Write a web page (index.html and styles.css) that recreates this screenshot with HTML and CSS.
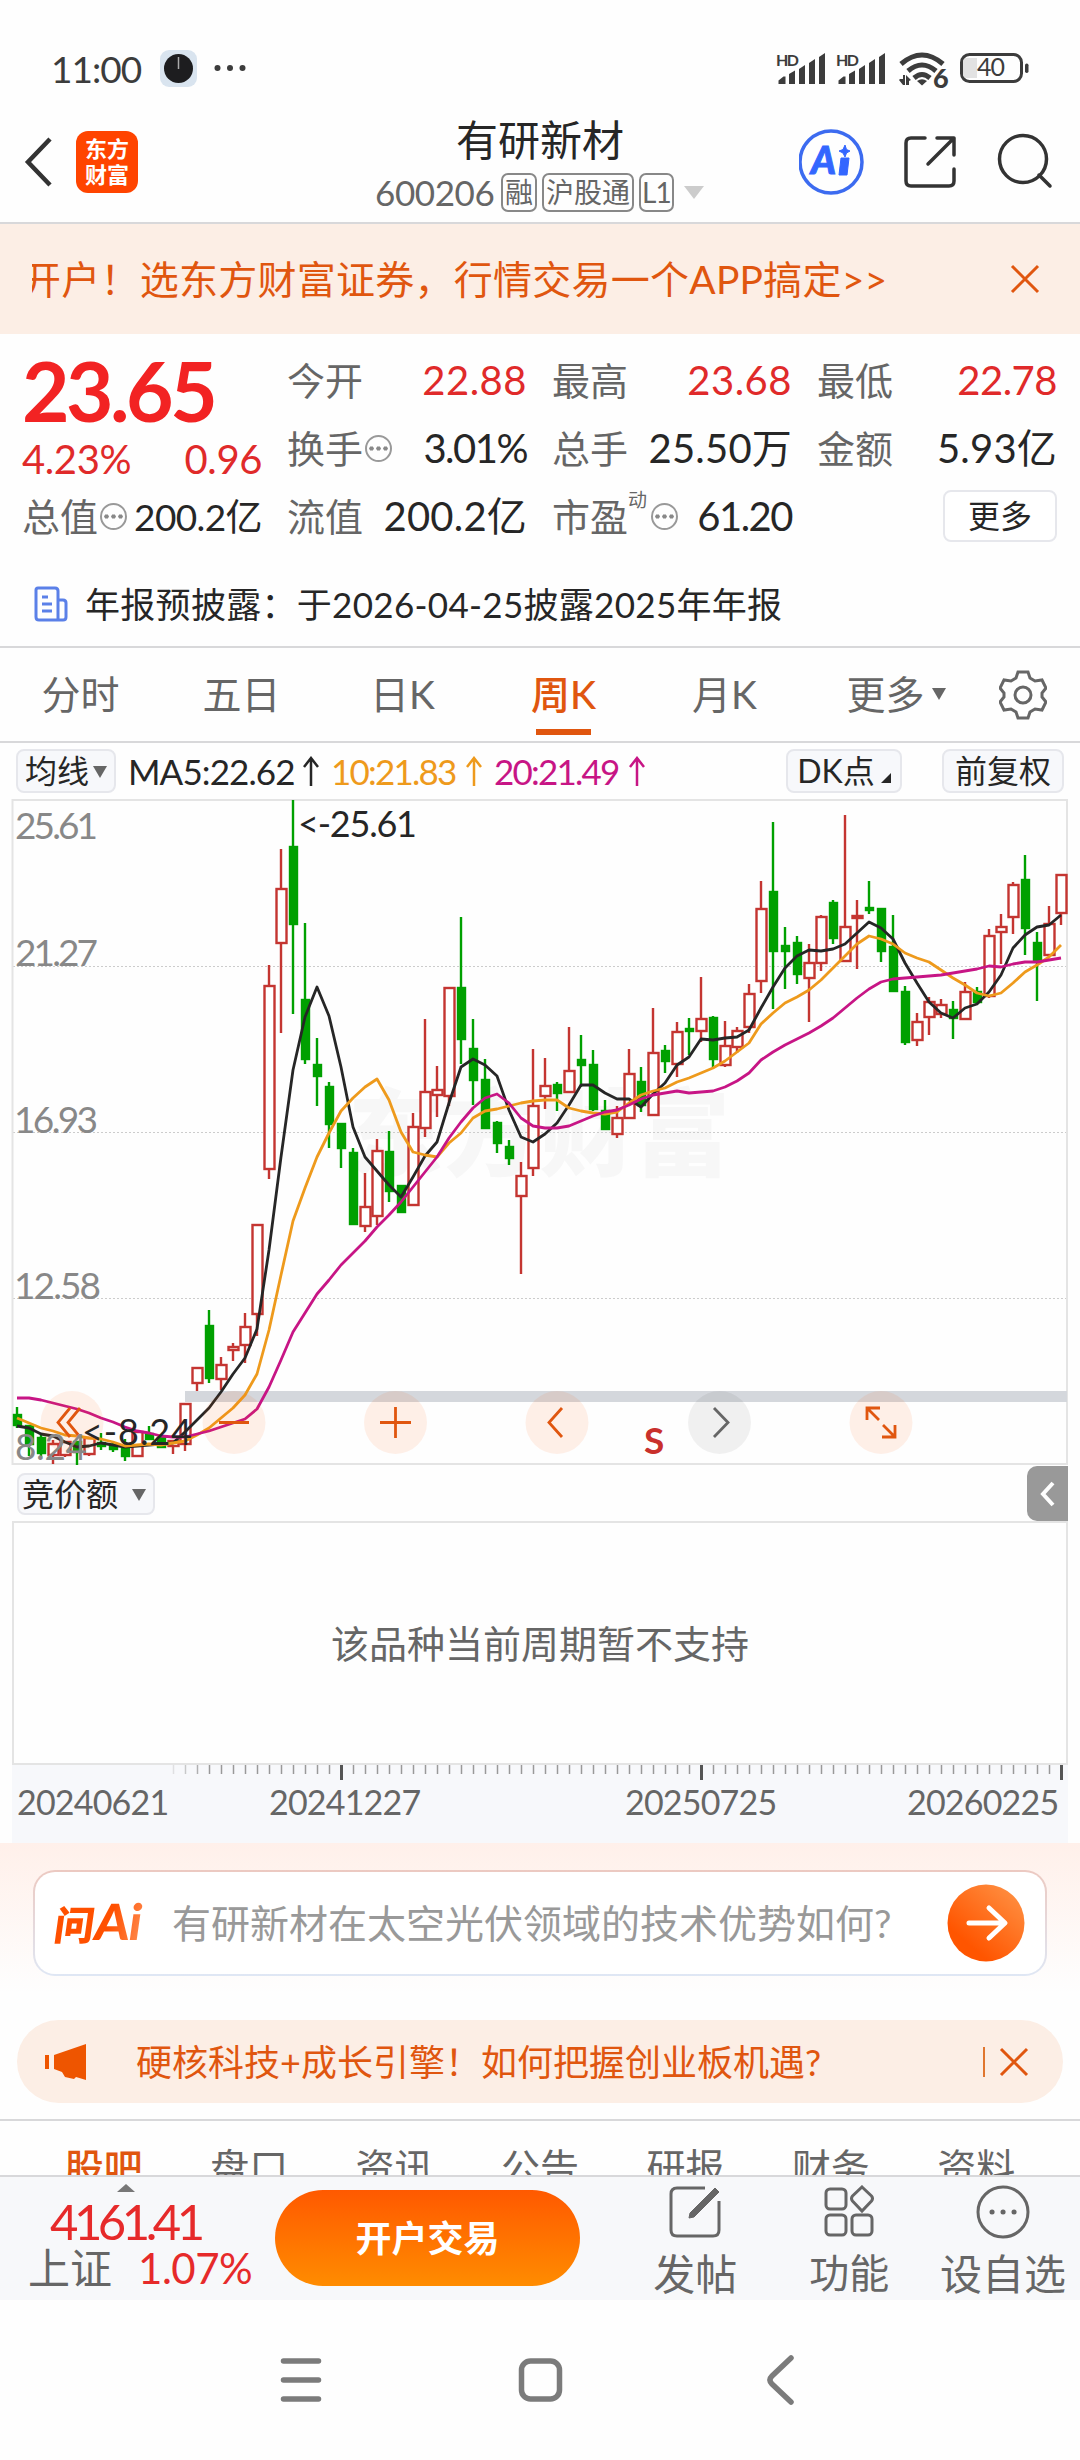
FILE: index.html
```html
<!DOCTYPE html>
<html lang="zh-CN">
<head>
    <meta charset="UTF-8">
    <title>有研新材 600206</title>
    <link rel="stylesheet" href="styles.css">
</head>
<body>
<div class="status-bar">
    <span class="time">11:00</span>
    <svg class="clock-app" viewBox="0 0 37 37">
        <rect width="37" height="37" rx="9" fill="#d9e4ef"/>
        <circle cx="18.500" cy="18.500" r="14.500" fill="#1d1d1f"/>
        <path d="M18.500 7v12" stroke="#aaa" stroke-width="1.500"/>
    </svg>
    <svg class="dots" viewBox="0 0 32 8">
        <circle cx="3.500" cy="4" r="3"/><circle cx="16" cy="4" r="3"/><circle cx="28.500" cy="4" r="3"/>
    </svg>
    <svg class="status-icons" viewBox="0 0 256 44">
        <g id="signal">
            <text class="hd" x="0" y="16" textLength="23">HD</text>
            <path d="M2.500 34v-3.500l5-4h2V34zM13 34V24l6-3.500V34zM23 34V19l6-4v19zM33 34V13l6-4v25zM43 34V7l6-4v31z"/>
        </g>
        <use href="#signal" x="60"/>
        <g fill="none" stroke="#3c3c3c" stroke-width="5">
            <path d="M125 14q21-18 42 0M132 21q14-12 28 0M138 28q8-7 16 0"/>
        </g>
        <path d="M141 31q5-3.500 10 0l-5 4.500z"/>
        <path d="M124 29h3v-4h2v10h-2l-4-5M130 35V25l5 5-2 1v4z"/>
        <text class="six" x="157" y="38">6</text>
        <rect x="185.500" y="4.500" width="60" height="27" rx="8" fill="none" stroke="#3c3c3c" stroke-width="3"/>
        <path d="M191 8h10v20h-10a4 4 0 0 1-4-4V12a4 4 0 0 1 4-4z" fill="#e2e2e2"/>
        <rect x="249" y="13.500" width="3.500" height="9.500" rx="1.700"/>
        <text class="battery" x="201" y="26" textLength="28">40</text>
    </svg>
</div>

<header class="top-nav">
    <svg class="back" viewBox="0 0 30 52"><path d="M26 3L4 26l22 23"/></svg>
    <div class="logo"><span>东方</span><span>财富</span></div>
    <div class="stock-title">
        <h1>有研新材</h1>
        <div class="stock-code">
            <span class="code">600206</span>
            <span class="tag">融</span>
            <span class="tag">沪股通</span>
            <span class="tag l1">L1</span>
            <i class="caret"></i>
        </div>
    </div>
    <svg class="nav-icons" viewBox="0 0 260 70">
        <circle cx="32" cy="35" r="31" fill="none" stroke="#3c6bf0" stroke-width="3.500"/>
        <text class="ai-text" x="12" y="47">A</text>
        <path d="M42 31h8l-2 17h-8zM46 18l1.500 4.500L51 24l-3.500 2L46 30l-2-4-4-2 4-1.500z" fill="#3366ff" stroke="#3366ff" stroke-width="1"/>
        <g fill="none" stroke="#333" stroke-width="3.500" stroke-linecap="round" stroke-linejoin="round">
            <path d="M126 11h-14q-5 0-5 5v38q0 5 5 5h38q5 0 5-5V42M138 11h17v17M155 11l-26 26"/>
            <circle cx="224" cy="32" r="23.500"/>
            <path d="M240 48l11 11"/>
        </g>
    </svg>
</header>

<div class="promo">
    <p>开户！选东方财富证券，行情交易一个APP搞定&gt;&gt;</p>
    <svg class="close" viewBox="0 0 30 30"><path d="M2 2l26 26M28 2L2 28"/></svg>
</div>

<section class="quote">
    <div class="price">
        <strong>23.65</strong>
        <div><span>4.23%</span><span>0.96</span></div>
    </div>
    <div class="item"><label>今开</label><b class="red">22.88</b></div>
    <div class="item"><label>最高</label><b class="red">23.68</b></div>
    <div class="item"><label>最低</label><b class="red last">22.78</b></div>
    <div class="item"><label>换手</label><i class="info"></i><b class="tight">3.01%</b></div>
    <div class="item"><label>总手</label><b>25.50万</b></div>
    <div class="item"><label>金额</label><b>5.93亿</b></div>
    <div class="item small"><label>总值</label><i class="info"></i><b>200.2亿</b></div>
    <div class="item"><label>流值</label><b>200.2亿</b></div>
    <div class="item"><label>市盈</label><sup>动</sup><i class="info"></i><b class="tight">61.20</b></div>
    <div class="item"><button>更多</button></div>
</section>

<div class="notice">
    <svg viewBox="0 0 34 36">
        <path d="M4 2h17q3 0 3 3v29H5q-3 0-3-3V4q0-2 2-2zM24 14h5q3 0 3 3v14q0 3-3 3h-6M8 11h6M8 18h10M8 25h10"/>
    </svg>
    <p>年报预披露：于2026-04-25披露2025年年报</p>
</div>

<nav class="periods">
    <a>分时</a><a>五日</a><a>日K</a><a class="active">周K</a><a>月K</a>
    <a class="more">更多<i class="caret"></i></a>
    <svg viewBox="0 0 48 50">
        <path d="M19 2h10l2 6 5 3 7-1 4 8-4 5v4l4 5-4 8-7-1-5 3-2 6H19l-2-6-5-3-7 1-4-8 4-5v-4l-4-5 4-8 7 1 5-3z"/>
        <circle cx="24" cy="25" r="8"/>
    </svg>
</nav>

<div class="ma-bar">
    <button>均线<i class="caret"></i></button>
    <span class="ma5">MA5:22.62</span><svg viewBox="0 0 16 30"><path d="M8 30V3M1 11l7-9 7 9"/></svg>
    <span class="ma10">10:21.83</span><svg class="ma10" viewBox="0 0 16 30"><path d="M8 30V3M1 11l7-9 7 9"/></svg>
    <span class="ma20">20:21.49</span><svg class="ma20" viewBox="0 0 16 30"><path d="M8 30V3M1 11l7-9 7 9"/></svg>
    <button class="dk">DK点<i class="corner"></i></button>
    <button class="adjust">前复权</button>
</div>

<svg class="kline" viewBox="0 798 1080 668">
    <text class="watermark" x="348" y="1169" textLength="382">东方财富</text>
    <path class="grid" d="M13 966.500H1067M13 1132.500H1067M13 1298.500H1067"/>
    <path class="frame" d="M12.500 800H1067V1464H12.500z"/>
    <g id="candles"></g>
    <rect x="185" y="1391" width="882" height="11" fill="#d4d7dc"/>
    <g id="averages"></g>
    <g class="controls">
        <circle cx="72" cy="1422.500" r="31.500"/><circle cx="234" cy="1422.500" r="31.500"/>
        <circle cx="395.500" cy="1422.500" r="31.500"/><circle cx="557" cy="1422.500" r="31.500"/>
        <circle class="off" cx="719.500" cy="1422.500" r="31.500"/><circle cx="881" cy="1422.500" r="31.500"/>
        <path d="M70 1408l-12 14.500 12 14.500M80 1408l-12 14.500 12 14.500M219 1422.500h30M380 1422.500h31M395.500 1407v31M562 1408l-13 14.500 13 14.500"/>
        <path class="off" d="M714 1408l14 14.500-14 14.500"/>
        <path d="M867 1420v-12h13M868 1409l11 11M895 1425v12h-13M894 1436l-11-11"/>
    </g>
    <g class="levels">
        <text x="15" y="839" textLength="83">25.61</text>
        <text x="15" y="966" textLength="83">21.27</text>
        <text x="14" y="1133" textLength="84">16.93</text>
        <text x="14" y="1299" textLength="87">12.58</text>
        <text x="15" y="1460" textLength="72">8.24</text>
    </g>
    <text class="mark" x="298" y="837" textLength="119">&lt;-25.61</text>
    <text class="mark" x="82" y="1445" textLength="110">&lt;-8.24</text>
    <text class="sell" x="644" y="1454">S</text>
</svg>

<div class="sub-bar">
    <button>竞价额<i class="caret"></i></button>
    <div class="drawer"><svg viewBox="0 0 16 28"><path d="M13 3L3 14l10 11"/></svg></div>
</div>
<div class="sub-chart">该品种当前周期暂不支持</div>
<div class="axis">
    <svg viewBox="12 0 1056 16"><g id="ticks"></g></svg>
    <div><span>20240621</span><span>20241227</span><span>20250725</span><span>20260225</span></div>
</div>

<section class="ask">
    <div class="ask-box">
        <span class="ask-logo">问<em>Ai</em></span>
        <p>有研新材在太空光伏领域的技术优势如何?</p>
        <svg viewBox="0 0 78 78">
            <defs>
                <linearGradient id="go" x1="0.300" y1="0.800" x2="0.900" y2="0.100">
                    <stop offset="0" stop-color="#ff5500"/><stop offset="1" stop-color="#ff8e40"/>
                </linearGradient>
            </defs>
            <circle cx="39" cy="39" r="38.500" fill="url(#go)"/>
            <path d="M22 39h35M42 24l16 15-16 15"/>
        </svg>
    </div>
    <div class="pill">
        <svg class="horn" viewBox="0 0 42 36"><path d="M0 11h4v14H0zM9 11L41 0v36l-10-3-2 2-9-2-3-5-8-3z"/></svg>
        <p>硬核科技+成长引擎！如何把握创业板机遇?</p>
        <svg class="close" viewBox="0 0 30 30"><path d="M2 2l26 26M28 2L2 28"/></svg>
    </div>
</section>

<nav class="info-tabs">
    <a class="active">股吧</a><a>盘口</a><a>资讯</a><a>公告</a><a>研报</a><a>财务</a><a>资料</a>
</nav>

<footer class="bottom-bar">
    <div class="index">
        <i class="caret up"></i>
        <b>4161.41</b>
        <div><span>上证</span><b>1.07%</b></div>
    </div>
    <button>开户交易</button>
    <a class="post">
        <svg viewBox="0 0 54 54"><path d="M37 3H9Q3 3 3 9v36q0 6 6 6h36q6 0 6-6V16"/><path d="M21 33l1-5L47 3l4 4-25 25z" fill="#666" stroke-width="1"/></svg>
        发帖
    </a>
    <a class="tools">
        <svg viewBox="0 0 54 54"><rect x="4" y="4" width="20" height="20" rx="4"/><rect x="4" y="30" width="20" height="20" rx="4"/><rect x="30" y="30" width="20" height="20" rx="4"/><path d="M40 2l9.500 9q2 2.500 0 5L40 26l-9.500-10q-2-2.500 0-5z"/></svg>
        功能
    </a>
    <a class="watch">
        <svg viewBox="0 0 54 54"><circle cx="27" cy="27" r="25"/><path class="dot" d="M16 27h.1M27 27h.1M38 27h.1"/></svg>
        设自选
    </a>
</footer>

<div class="system-nav">
    <svg viewBox="0 0 600 100">
        <path d="M43.500 31h35M43.500 50h35M43.500 69h35"/>
        <rect x="281.500" y="31" width="38" height="38" rx="9"/>
        <path d="M551 28l-19 18q-4 4 0 8l19 18"/>
    </svg>
</div>
<script src="app.js"></script>
</body>
</html>
```
FILE: styles.css
```css
body {
    margin: 0;
    width: 1080px;
    background: #fefefe;
    color: #262626;
    font-family: Lato, "Noto Sans CJK SC", sans-serif;
    line-height: 1;
}
h1, p {
    margin: 0;
    font-weight: normal;
}
button {
    box-sizing: border-box;
    padding: 0;
    border: 2px solid #e6e7ec;
    border-radius: 8px;
    background: #f7f8fb;
    color: #262626;
    font-family: inherit;
    font-size: 32px;
    line-height: 1;
    white-space: nowrap;
}
svg {
    flex: none;
}
.caret {
    display: inline-block;
    border: 7px solid transparent;
    border-top: 12px solid #666;
    border-bottom: 0;
}
.close {
    width: 30px;
    height: 30px;
    stroke: #e0560f;
    stroke-width: 3;
}

/* status bar */
.status-bar {
    display: flex;
    box-sizing: border-box;
    height: 112px;
    padding: 50px 44px 0 51px;
    color: #3c3c3c;
    fill: #3c3c3c;
}
.time {
    width: 109px;
    font-size: 37px;
    letter-spacing: -1px;
}
.clock-app {
    width: 37px;
    height: 37px;
}
.dots {
    width: 32px;
    height: 8px;
    margin: 14px auto 0 17px;
}
.status-icons {
    width: 256px;
    height: 44px;
    margin-right: 4px;
}
.hd {
    font-size: 16px;
    font-weight: 700;
}
.six {
    font-size: 27px;
    font-weight: 900;
}
.battery {
    font-size: 25px;
}

/* header */
.top-nav {
    display: flex;
    box-sizing: border-box;
    height: 112px;
    border-bottom: 2px solid #d8d8da;
}
.back {
    width: 30px;
    height: 52px;
    margin: 24px 22px 0 24px;
    fill: none;
    stroke: #333;
    stroke-width: 4.500;
}
.logo {
    display: flex;
    flex-direction: column;
    justify-content: center;
    width: 62px;
    height: 62px;
    margin-top: 19px;
    border-radius: 12px;
    background: #ff4400;
    color: #fff;
    font-size: 22px;
    font-weight: 700;
    line-height: 26px;
    text-align: center;
}
.stock-title {
    width: 390px;
    margin: 4px 0 0 207px;
    padding-left: 8px;
    text-align: center;
}
.stock-title h1 {
    width: 374px;
    font-size: 42px;
    line-height: 48px;
    font-weight: 400;
}
.stock-code {
    display: flex;
    align-items: center;
    width: 360px;
    margin: 9px 0 0 22px;
    color: #666;
}
.code {
    width: 126px;
    font-size: 35px;
    letter-spacing: -0.4px;
    text-align: left;
}
.tag {
    box-sizing: border-box;
    height: 39px;
    margin-right: 5px;
    padding: 0 2px;
    border: 2px solid #888;
    border-radius: 7px;
    font-size: 28px;
    line-height: 34px;
}
.l1 {
    padding: 0 1px;
    letter-spacing: -1px;
}
.stock-code .caret {
    margin-left: 5px;
    border-width: 13px 10px 0;
    border-top-color: #ccc;
}
.nav-icons {
    width: 260px;
    height: 70px;
    margin: 15px 0 0 56px;
}
.ai-text {
    fill: #3366ff;
    stroke: #3366ff;
    font-size: 38px;
    font-style: italic;
    font-weight: 900;
}

.promo {
    display: flex;
    align-items: center;
    justify-content: space-between;
    box-sizing: border-box;
    height: 110px;
    padding: 0 40px 0 32px;
    background: #fceee5;
    color: #e0560f;
    font-size: 39px;
}
.promo p {
    overflow: hidden;
    line-height: 50px;
    letter-spacing: 0.25px;
    text-indent: -10px;
    white-space: nowrap;
}

/* quote panel */
.quote {
    display: grid;
    grid-template-columns: repeat(4, 240px);
    grid-template-rows: repeat(3, 68px);
    column-gap: 25px;
    height: 216px;
    padding: 12px 0 0 22px;
}
.price {
    grid-row: span 2;
    color: #f22323;
}
.price strong {
    display: block;
    margin-top: 4px;
    font-size: 82px;
    line-height: 80px;
    letter-spacing: -3.500px;
}
.price div {
    display: flex;
    justify-content: space-between;
    margin-top: 9px;
    color: #e02a2a;
    font-size: 40px;
    letter-spacing: -0.4px;
}
.item {
    display: flex;
    align-items: center;
}
.item label {
    color: #666;
    font-size: 38px;
}
.item b {
    margin-left: auto;
    color: #262626;
    font-size: 40px;
    font-weight: normal;
    letter-spacing: 0.2px;
    white-space: nowrap;
}
.item b.red {
    color: #e02a2a;
    letter-spacing: 0.5px;
}
.item b.tight {
    letter-spacing: -1.500px;
}
.item b.last {
    letter-spacing: -0.5px;
}
.item.small b {
    font-size: 37px;
    letter-spacing: -0.6px;
}
.item sup {
    align-self: flex-start;
    margin: 8px 2px 0 0;
    color: #666;
    font-size: 19px;
}
.info {
    box-sizing: border-box;
    flex: none;
    width: 27px;
    height: 27px;
    margin-left: 2px;
    border: 2px solid #999;
    border-radius: 50%;
    background: radial-gradient(circle, #888 2px, transparent 2.500px) center / 7px 24px repeat-x content-box;
}
.item button {
    width: 114px;
    height: 52px;
    margin-left: auto;
    background: #fff;
}
.notice {
    display: flex;
    align-items: center;
    box-sizing: border-box;
    height: 86px;
    padding: 0 0 0 34px;
    border-bottom: 2px solid #d8d8da;
    font-size: 35px;
    letter-spacing: 0.3px;
}
.notice svg {
    width: 34px;
    height: 36px;
    margin-right: 17px;
    fill: none;
    stroke: #5b80e8;
    stroke-width: 3;
}

/* period tabs */
.periods {
    display: grid;
    grid-template-columns: repeat(5, 161px) 194px 48px;
    box-sizing: border-box;
    height: 95px;
    border-bottom: 2px solid #d8d8da;
    align-items: center;
    color: #666;
    font-size: 39px;
    text-align: center;
}
.periods .active {
    color: #e0560f;
    font-weight: 500;
    background: linear-gradient(#e0560f, #e0560f) 53px 80px / 55px 6px no-repeat;
    line-height: 91px;
}
.periods .more {
    margin-right: 12px;
}
.more .caret {
    margin: 0 0 9px 7px;
}
.periods svg {
    width: 48px;
    height: 50px;
    fill: none;
    stroke: #666;
    stroke-width: 3;
}

/* moving average row */
.ma-bar {
    display: flex;
    align-items: center;
    box-sizing: border-box;
    height: 55px;
    padding: 1px 16px 0;
    font-size: 35px;
    white-space: nowrap;
}
.ma-bar button {
    height: 44px;
    width: 100px;
}
.ma-bar button .caret {
    margin: 0 0 5px 4px;
}
.ma-bar span {
    width: 165px;
    margin-left: 12px;
    letter-spacing: -0.9px;
}
.ma-bar svg {
    width: 16px;
    height: 30px;
    margin-left: 10px;
    fill: none;
    stroke: #262626;
    stroke-width: 2.500;
}
.ma-bar .ma10, .ma-bar .ma20 {
    color: #ee9a1c;
    stroke: #ee9a1c;
}
.ma-bar span.ma10, .ma-bar span.ma20 {
    width: 125px;
    letter-spacing: -1.800px;
}
.ma-bar .ma20 {
    color: #c71585;
    stroke: #c71585;
}
.ma-bar .dk {
    width: 116px;
    margin-left: auto;
}
.corner {
    display: inline-block;
    margin-left: 6px;
    border: 5px solid #262626;
    border-top-color: transparent;
    border-left-color: transparent;
}
.ma-bar .adjust {
    width: 122px;
    margin-left: 40px;
}

/* k line chart */
.kline {
    display: block;
    width: 1080px;
    height: 668px;
}
.watermark {
    fill: #f7f7f7;
    font-size: 95px;
    font-weight: 900;
}
.grid {
    stroke: #ccc;
    stroke-dasharray: 2 2;
}
.frame {
    fill: none;
    stroke: #e4e4e4;
    stroke-width: 2;
}
.up {
    fill: #fff;
    stroke: #c43531;
    stroke-width: 2.400;
}
.down {
    fill: #00a000;
    stroke: #00a000;
    stroke-width: 2.400;
}
.ma-line {
    fill: none;
    stroke-width: 2.800;
    stroke-linejoin: round;
}
.controls circle {
    fill: rgba(255, 85, 0, 0.09);
}
.controls circle.off {
    fill: rgba(0, 0, 0, 0.055);
}
.controls path {
    fill: none;
    stroke: #e0560f;
    stroke-width: 2.800;
}
.controls path.off {
    stroke: #666;
}
.levels {
    fill: #888;
    font-size: 37px;
}
.mark {
    fill: #262626;
    font-size: 36px;
}
.sell {
    fill: #c9302c;
    font-size: 37px;
    font-weight: 700;
}

/* lower pane */
.sub-bar {
    display: flex;
    align-items: center;
    justify-content: space-between;
    height: 55px;
    padding: 0 12px 0 17px;
}
.sub-bar button {
    width: 138px;
    height: 42px;
}
.sub-bar .caret {
    margin: 0 4px 5px 14px;
}
.drawer {
    display: flex;
    align-items: center;
    justify-content: center;
    width: 41px;
    height: 55px;
    border-radius: 10px 0 0 10px;
    background: #999;
}
.drawer svg {
    width: 16px;
    height: 28px;
    fill: none;
    stroke: #fff;
    stroke-width: 4;
}
.sub-chart {
    box-sizing: border-box;
    height: 244px;
    margin: 0 12px;
    border: 2px solid #e4e4e4;
    color: #666;
    font-size: 38px;
    line-height: 240px;
    text-align: center;
}
.axis {
    height: 78px;
    margin: 0 12px;
    background: #f7f8fb;
    color: #666;
    font-size: 34px;
}
.axis svg {
    display: block;
    width: 1056px;
    height: 16px;
}
.axis div {
    display: grid;
    grid-template-columns: 252px 356px 282px 160px;
    padding: 4px 0 0 5px;
    letter-spacing: -0.8px;
}

/* ask box */
.ask {
    height: 276px;
    background: linear-gradient(#fff0ea, #fefefe 150px);
}
.ask-box {
    display: flex;
    position: relative;
    top: 27px;
    align-items: center;
    box-sizing: border-box;
    height: 106px;
    margin: 0 33px;
    padding: 0 20px;
    border: 2px solid transparent;
    border-radius: 22px;
    background: linear-gradient(#fff, #fff) padding-box, linear-gradient(#ecc9c1, #dfe7f4) border-box;
}
.ask-logo {
    display: inline-block;
    width: 98px;
    background: linear-gradient(100deg, #ff5000 55%, #ff9c66);
    -webkit-background-clip: text;
    background-clip: text;
    color: transparent;
    font-size: 40px;
    font-weight: 900;
    line-height: 50px;
    white-space: nowrap;
    transform: skewX(-8deg);
}
.ask-logo em {
    font-size: 50px;
    font-style: normal;
    letter-spacing: -1px;
}
.ask-box p {
    margin-left: 19px;
    color: #999;
    font-size: 39px;
    white-space: nowrap;
}
.ask-box svg {
    width: 78px;
    height: 78px;
    margin-left: auto;
}
.ask-box path {
    fill: none;
    stroke: #fff;
    stroke-width: 5;
    stroke-linecap: round;
    stroke-linejoin: round;
}
.pill {
    display: flex;
    align-items: center;
    height: 83px;
    margin: 71px 17px 0;
    border-radius: 42px;
    background: #fceee5;
    color: #e0560f;
    font-size: 36px;
}
.horn {
    width: 42px;
    height: 36px;
    margin: 0 49px 0 28px;
    fill: #ee5500;
}
.pill .close {
    margin-left: auto;
    margin-right: 34px;
    padding-left: 14px;
    border-left: 2px solid #e0762f;
}

.info-tabs {
    display: grid;
    grid-template-columns: repeat(7, 1fr);
    box-sizing: border-box;
    height: 56px;
    padding: 27px 31px 0;
    overflow: hidden;
    border-top: 2px solid #d8d8da;
    color: #666;
    font-size: 39px;
    text-align: center;
}
.info-tabs .active {
    color: #e0560f;
    font-weight: 500;
}

/* bottom bar */
.bottom-bar {
    display: flex;
    box-sizing: border-box;
    height: 125px;
    border-top: 2px solid #d8d8da;
    background: #f7f8fa;
    color: #666;
    font-size: 42px;
}
.index {
    width: 275px;
}
.caret.up {
    display: block;
    width: 0;
    margin: 7px 0 0 117px;
    border: 9px solid transparent;
    border-top: 0;
    border-bottom: 8px solid #777;
}
.index b {
    display: block;
    color: #e62a2a;
    font-weight: normal;
}
.index > b {
    margin: 4px 0 0 50px;
    font-size: 49px;
    line-height: 50px;
    letter-spacing: -4.500px;
}
.index div {
    display: flex;
    gap: 26px;
    padding-left: 28px;
    line-height: 44px;
}
.index div b {
    letter-spacing: -0.5px;
}
.bottom-bar button {
    width: 306px;
    height: 96px;
    margin: 13px 0 0;
    border: 0;
    border-radius: 48px;
    background: linear-gradient(#ff5900, #ff8c00);
    color: #fff;
    font-size: 36px;
    font-weight: 700;
}
.bottom-bar a {
    display: flex;
    flex-direction: column;
    align-items: center;
    width: 154px;
    padding-top: 8px;
    white-space: nowrap;
}
.bottom-bar .post {
    margin-left: 38px;
}
.bottom-bar .tools {
    font-size: 40px;
}
.bottom-bar svg {
    width: 54px;
    height: 54px;
    margin-bottom: 14px;
    fill: none;
    stroke: #666;
    stroke-width: 3;
}
.bottom-bar .dot {
    stroke-width: 5;
    stroke-linecap: round;
}

.system-nav {
    height: 160px;
    padding-left: 240px;
}
.system-nav svg {
    width: 600px;
    height: 100px;
    margin-top: 30px;
    fill: none;
    stroke: #7b7b7b;
    stroke-width: 5.500;
    stroke-linecap: round;
}
```
FILE: app.js
```js
// one row per week: high, body top, body bottom, low, u(p) or d(own)
const weeks = `1407 1415 1425 1428 d|1426 1426 1444 1456 d|1435 1438 1453 1457 d|1440 1444 1455 1464 u
1441 1442 1455 1457 u|1441 1442 1452 1465 d|1437 1438 1454 1456 u|1433 1443 1446 1450 d
1442 1445 1449 1452 d|1439 1449 1456 1461 d|1430 1432 1456 1456 u|1426 1434 1439 1439 d
1437 1438 1447 1448 d|1440 1441 1446 1454 u|1403 1404 1444 1451 u|1367 1368 1383 1391 u
1310 1326 1378 1383 d|1357 1365 1379 1390 u|1343 1347 1350 1361 u|1313 1327 1345 1363 u
1224 1225 1314 1336 u|965 986 1169 1179 u|849 889 943 1033 u|800 847 924 1014 d
923 1000 1059 1064 d|1038 1065 1076 1106 d|1082 1087 1124 1148 d|1123 1124 1148 1168 d
1148 1153 1224 1225 d|1173 1207 1226 1232 u|1139 1151 1216 1225 u|1131 1152 1191 1202 d
1186 1186 1212 1212 d|1113 1127 1205 1205 u|1019 1092 1128 1137 u|1066 1090 1095 1117 u
987 988 1096 1106 u|917 988 1039 1064 d|1019 1049 1080 1105 d|1059 1080 1128 1128 d
1121 1123 1143 1153 d|1140 1147 1158 1165 d|1162 1176 1196 1274 u|1049 1106 1168 1176 u
1058 1086 1096 1109 u|1082 1085 1093 1111 d|1027 1071 1092 1092 u|1035 1060 1065 1087 d
1050 1065 1109 1111 d|1100 1111 1129 1129 d|1106 1118 1134 1138 u|1049 1074 1118 1118 u
1067 1082 1105 1112 d|1008 1053 1115 1115 u|1045 1051 1061 1073 d|1022 1032 1064 1077 u
1018 1029 1031 1055 d|977 1019 1031 1042 u|1016 1018 1059 1067 d|1021 1046 1065 1067 u
1027 1031 1047 1053 u|984 994 1027 1033 u|881 909 981 993 u|822 892 951 1009 d
927 946 951 989 d|936 943 974 984 d|944 963 978 1022 u|915 917 963 971 u
900 903 938 944 d|815 927 961 962 u|900 916 918 969 u|881 908 910 914 d
908 909 951 962 d|915 947 991 991 d|986 992 1042 1045 d|1013 1022 1040 1046 u
997 1002 1017 1035 u|999 1005 1014 1018 u|1001 1010 1018 1039 d|982 992 1019 1019 u
987 992 1002 1003 d|929 936 996 998 u|914 927 932 964 u|882 885 917 934 u
855 880 928 955 d|932 943 961 1001 d|906 924 955 955 u|875 875 913 925 u`.split(/[|\n]/);

const averages = {
    '#262626': `1426 1428 1434 1436 1442 1447 1446 1443 1445 1447 1446 1445 1444 1443 1432 1420 1408 1392 1374 1358 1329 1250 1157 1070 1017 987 1016 1067 1127 1157 1171 1185 1197 1177 1156 1142 1103 1067 1059 1065 1076 1110 1137 1142 1134 1123 1105 1085 1085 1093 1099 1099 1107 1094 1083 1065 1057 1039 1040 1038 1037 1030 1008 987 968 956 950 951 949 944 933 922 928 939 963 983 1002 1013 1018 1008 1004 992 975 948 935 927 925 915`,
    '#ee9a1c': `1418 1423 1428 1431 1435 1436 1438 1439 1442 1446 1445 1444 1445 1443 1441 1435 1428 1418 1408 1395 1374 1330 1275 1221 1188 1157 1133 1111 1098 1087 1079 1100 1132 1152 1155 1157 1143 1133 1118 1111 1109 1106 1103 1101 1100 1100 1108 1111 1113 1114 1112 1103 1095 1091 1088 1082 1078 1073 1068 1061 1052 1043 1024 1013 1003 997 990 980 968 956 944 936 939 944 953 958 962 970 978 985 993 996 993 983 972 965 957 945`,
    '#c71585': `1398 1398 1400 1403 1406 1409 1413 1418 1422 1427 1431 1433 1436 1437 1437 1434 1431 1427 1423 1419 1409 1387 1360 1332 1313 1294 1280 1265 1253 1241 1227 1215 1202 1187 1172 1157 1138 1122 1108 1098 1094 1103 1118 1126 1128 1128 1126 1121 1116 1112 1110 1105 1099 1095 1093 1091 1093 1092 1091 1087 1081 1073 1060 1052 1045 1039 1033 1026 1018 1008 998 989 982 979 978 977 976 975 973 971 969 966 967 964 962 962 960 958`
};

const x = i => 17 + i * 12;

document.getElementById("candles").innerHTML = weeks.map((row, i) => {
    const [high, top, bottom, low, dir] = row.split(" ");
    const height = Math.max(bottom - top, 1);
    // the wick of a rising week stops at the hollow body
    return `<g class="${dir === "u" ? "up" : "down"}">
        <path d="M${x(i)} ${high}V${low}"/>
        <rect x="${dir === "u" ? x(i) - 4.5 : x(i) - 3}" y="${top}" width="${dir === "u" ? 10 : 7}" height="${height}"/>
    </g>`;
}).join("");

document.getElementById("averages").innerHTML = Object.entries(averages).map(([color, values]) => {
    const points = values.split(" ").map((y, i) => `${x(i)},${y}`).join(" ");
    return `<polyline class="ma-line" stroke="${color}" points="${points}"/>`;
}).join("");

// time axis ticks, fading in on the left
let ticks = "";
for (let i = 13; i < 88; i++) {
    const major = i === 27 || i === 57 || i === 87;
    ticks += `<path d="M${x(i) + 0.5} 0v${major ? 15 : 9}" stroke="${major ? "#555" : "#999"}"
        stroke-width="${major ? 3 : 1.5}" opacity="${Math.min(1, (i - 12) / 4)}"/>`;
}
document.getElementById("ticks").innerHTML = ticks;
```
